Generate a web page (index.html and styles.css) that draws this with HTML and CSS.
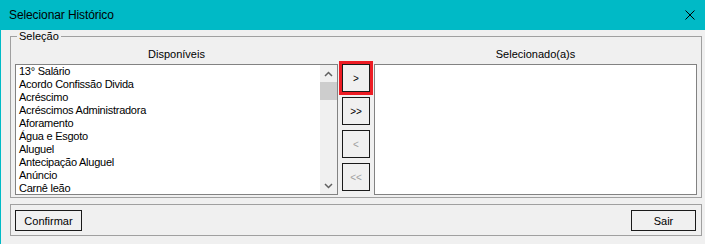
FILE: index.html
```html
<!DOCTYPE html>
<html>
<head>
  <title>Selecionar Histórico</title>
  <link rel="stylesheet" href="styles.css">
</head>
<body>
  <div class="window">
    <div class="titlebar">
      <span class="title">Selecionar Histórico</span>
      <svg class="close" width="10" height="10" viewBox="0 0 10 10">
        <path d="M0.5 0.5 L9.5 9.5 M9.5 0.5 L0.5 9.5" stroke="#000" stroke-width="1"/>
      </svg>
    </div>

    <fieldset class="group">
      <legend>Seleção</legend>
      <div class="picker">
        <div class="list-title">Disponíveis</div>
        <div></div>
        <div class="list-title">Selecionado(a)s</div>

        <div class="listbox">
          <ul class="items">
            <li>13° Salário</li>
            <li>Acordo Confissão Divida</li>
            <li>Acréscimo</li>
            <li>Acréscimos Administradora</li>
            <li>Aforamento</li>
            <li>Água e Esgoto</li>
            <li>Aluguel</li>
            <li>Antecipação Aluguel</li>
            <li>Anúncio</li>
            <li>Carnê leão</li>
          </ul>
          <div class="scrollbar">
            <div class="scroll-arrow">
              <svg width="9" height="6" viewBox="0 0 9 6"><path d="M1 5 L4.5 1.5 L8 5" fill="none" stroke="#606060" stroke-width="1.5"/></svg>
            </div>
            <div class="thumb"></div>
            <div class="track"></div>
            <div class="scroll-arrow">
              <svg width="9" height="6" viewBox="0 0 9 6"><path d="M1 1 L4.5 4.5 L8 1" fill="none" stroke="#606060" stroke-width="1.5"/></svg>
            </div>
          </div>
        </div>

        <div class="move-buttons">
          <button class="move focused">&gt;</button>
          <button class="move">&gt;&gt;</button>
          <button class="move" disabled>&lt;</button>
          <button class="move" disabled>&lt;&lt;</button>
        </div>

        <div class="listbox"></div>
      </div>
    </fieldset>

    <div class="actions">
      <button class="action confirm">Confirmar</button>
      <button class="action exit">Sair</button>
    </div>
  </div>
</body>
</html>
```

FILE: styles.css
```css
* {
  box-sizing: border-box;
}

body {
  margin: 0;
  font-family: "Liberation Sans", Arial, sans-serif;
  font-size: 11px;
  color: #000;
}

.window {
  width: 705px;
  height: 244px;
  background-color: #f0f0f0;
  border-left: 1px solid #00bac6;
  overflow: hidden;
}

.titlebar {
  height: 30px;
  background-color: #00bac6;
  display: flex;
  align-items: center;
  justify-content: space-between;
  padding: 0 10px 0 8px;
}

.title {
  font-size: 12px;
  letter-spacing: -0.1px;
}

.close {
  display: block;
}

/* group boxes */
.group {
  width: 692px;
  min-width: 0;
  margin: 0 0 0 9px;
  padding: 0 4px 2px;
  border: 1px solid #a0a0a0;
}

.group legend {
  margin-left: 2px;
  padding: 0 2px;
  line-height: 13px;
  font-size: 11px;
}

.picker {
  display: grid;
  grid-template-columns: 323px 28px 323px;
  column-gap: 4px;
  padding-top: 5px;
}

.list-title {
  text-align: center;
  line-height: 13px;
  margin-bottom: 3px;
}

.listbox {
  height: 131px;
  background-color: #fff;
  border: 1px solid #828282;
  display: flex;
}

.items {
  flex: 1;
  list-style: none;
  margin: 0;
  padding: 0 0 0 3px;
  line-height: 13px;
  letter-spacing: -0.25px;
  overflow: hidden;
}

.scrollbar {
  width: 17px;
  background-color: #f0f0f0;
  display: flex;
  flex-direction: column;
}

.scroll-arrow {
  height: 17px;
  display: flex;
  align-items: center;
  justify-content: center;
}

.scroll-arrow svg {
  display: block;
}

.thumb {
  height: 18px;
  background-color: #cdcdcd;
}

.track {
  flex: 1;
}

/* move buttons */
.move-buttons {
  display: flex;
  flex-direction: column;
  gap: 5px;
}

.move {
  width: 28px;
  height: 28px;
  padding: 0;
  border: 1px solid #1a1a1a;
  background-color: #f0f0f0;
  font-family: "Liberation Sans", Arial, sans-serif;
  font-size: 10px;
  color: #000;
}

.move:disabled {
  color: #a0a0a0;
}

.move.focused {
  outline: 3px solid #ed1c24;
}

/* bottom bar */
.actions {
  width: 692px;
  height: 32px;
  margin: 6px 0 0 9px;
  padding: 5px 5px 0 4px;
  border: 1px solid #a0a0a0;
  display: flex;
  justify-content: space-between;
  align-items: flex-start;
}

.action {
  height: 21px;
  padding: 0;
  border: 1px solid #1a1a1a;
  background-color: #f0f0f0;
  font-family: "Liberation Sans", Arial, sans-serif;
  font-size: 11px;
  color: #000;
}

.confirm {
  width: 67px;
}

.exit {
  width: 65px;
}
```
